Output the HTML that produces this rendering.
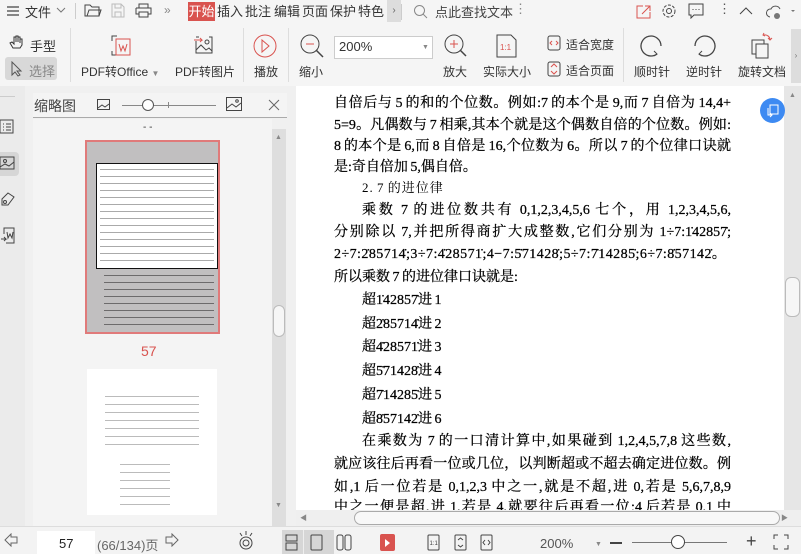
<!DOCTYPE html>
<html><head><meta charset="utf-8">
<style>
*{margin:0;padding:0;box-sizing:border-box}
body{width:801px;height:554px;overflow:hidden;background:#f3f3f3;font-family:"Liberation Sans","Noto Sans CJK SC",sans-serif;color:#333;position:relative}
.a{position:absolute}
.t{font-size:12px;color:#333;white-space:nowrap}
.tab{position:absolute;top:2px;height:19px;font-size:13px;line-height:19px;color:#333}
.pl{position:absolute;left:334px;width:397px;font-family:"Liberation Serif","Noto Serif CJK SC",serif;font-size:14px;color:#000;white-space:nowrap;text-align:justify;text-align-last:justify;line-height:20px;word-spacing:-1px;-webkit-text-stroke:0.25px #000}
.ind{left:362px;width:369px}
.nl{text-align-last:left}
.sv{position:absolute}
</style></head><body>
<div class="a" style="left:0;top:0;width:801px;height:86px;background:#f5f5f5"></div>
<svg class="sv" style="left:6px;top:4px" width="14" height="14"><path d="M1 3h12M1 7h12M1 11h12" stroke="#444" stroke-width="1.2"/></svg>
<div class="a t" style="left:25px;top:2px;font-size:13px">文件</div>
<svg class="sv" style="left:56px;top:7px" width="10" height="6"><path d="M1 1l4 4 4-4" stroke="#777" fill="none"/></svg>
<div class="a" style="left:75px;top:3px;width:1px;height:16px;background:#ccc"></div>
<svg class="sv" style="left:84px;top:3px" width="18" height="15"><path d="M1 2h5l2 2h7v9H1z M3 13l2-6h12l-2 6" stroke="#444" fill="none"/></svg>
<svg class="sv" style="left:111px;top:3px" width="14" height="15"><path d="M1 1h9l3 3v10H1z M4 1v4h6V1 M4 14v-5h6v5" stroke="#bbb" fill="none"/></svg>
<svg class="sv" style="left:135px;top:3px" width="17" height="15"><path d="M4 5V1h9v4 M1 5h15v6h-3 M4 11H1V5 M4 9h9v5H4z" stroke="#444" fill="none"/></svg>
<div class="a t" style="left:164px;top:3px;color:#888">»</div>
<div class="tab" style="left:188px;width:27px;background:#d9534f;color:#fff;text-align:center">开始</div>
<div class="tab" style="left:217px">插入</div>
<div class="tab" style="left:245px">批注</div>
<div class="tab" style="left:274px">编辑</div>
<div class="tab" style="left:302px">页面</div>
<div class="tab" style="left:330px">保护</div>
<div class="tab" style="left:358px;width:28px;overflow:hidden">特色应</div>
<div class="a" style="left:387px;top:0;width:14px;height:22px;background:#ddd;color:#666;font-size:10px;line-height:22px;text-align:center">›</div>
<div class="a" style="left:401px;top:4px;width:1px;height:16px;background:#ccc"></div>
<svg class="sv" style="left:413px;top:4px" width="16" height="16"><circle cx="6.5" cy="6.5" r="5" stroke="#888" fill="none"/><path d="M10 10l4 4" stroke="#888"/></svg>
<div class="a t" style="left:435px;top:2px;font-size:13px;color:#444">点此查找文本</div>
<div class="a t" style="left:514px;top:1px;color:#888;font-size:13px">⋮</div>
<svg class="sv" style="left:636px;top:4px" width="16" height="15"><path d="M7 2H1v12h13V8 M6 10l8-8M9 2h5v5" stroke="#d9534f" fill="none"/></svg>
<svg class="sv" style="left:661px;top:3px" width="16" height="16"><circle cx="8" cy="8" r="6" stroke="#444" fill="none" stroke-dasharray="3 1.5"/><circle cx="8" cy="8" r="2.5" stroke="#444" fill="none"/></svg>
<svg class="sv" style="left:688px;top:3px" width="16" height="16"><path d="M1 1h14v11H6l-3 3v-3H1z" stroke="#444" fill="none"/><path d="M4.5 6.5h1M7.5 6.5h1M10.5 6.5h1" stroke="#444"/></svg>
<div class="a t" style="left:718px;top:1px;color:#555;font-size:13px">⋮</div>
<svg class="sv" style="left:739px;top:7px" width="14" height="8"><path d="M1 7l6-6 6 6" stroke="#444" fill="none"/></svg>
<svg class="sv" style="left:766px;top:4px" width="30" height="16"><path d="M4 13a4 4 0 0 1 1-8 5 5 0 0 1 9 0" stroke="#555" fill="none"/><circle cx="11" cy="12" r="3" fill="#777"/><path d="M25 6l2 2 2-2" fill="#777"/></svg>
<svg class="sv" style="left:9px;top:34px" width="16" height="16"><path d="M4 14l-3-5 2-1 2 2V3h2v5V2h2v6V3h2v6V5h2v6l-2 3z" stroke="#333" fill="none"/></svg>
<div class="a t" style="left:30px;top:36px;font-size:13px">手型</div>
<div class="a" style="left:5px;top:57px;width:52px;height:23px;background:#d8d8d8;border-radius:3px"></div>
<svg class="sv" style="left:10px;top:61px" width="14" height="16"><path d="M2 1v13l3-3 3 4 2-1-3-4h4z" stroke="#555" fill="none"/></svg>
<div class="a t" style="left:29px;top:61px;font-size:13px;color:#888">选择</div>
<div class="a" style="left:70px;top:28px;width:1px;height:54px;background:#ddd"></div>
<svg class="sv" style="left:106px;top:33px" width="28" height="26"><path d="M6 8V3h5 M6 18v4h4" stroke="#444" fill="none"/><rect x="10" y="6" width="14" height="16" stroke="#d9534f" fill="none"/><path d="M13 11l2 7 2-5 2 5 2-7" stroke="#d9534f" fill="none"/></svg>
<div class="a t" style="left:81px;top:63px">PDF转Office <span style="font-size:8px;color:#888">▼</span></div>
<svg class="sv" style="left:193px;top:35px" width="22" height="20"><path d="M3 2h3 M16 2h3v16H3V6" stroke="#444" fill="none"/><path d="M1 5h8l-2-2M9 5l-2 2" stroke="#d9534f" fill="none"/><circle cx="14" cy="7" r="2" stroke="#444" fill="none"/><path d="M3 15l5-5 5 5 3-2 3 3" stroke="#444" fill="none"/></svg>
<div class="a t" style="left:175px;top:63px">PDF转图片</div>
<div class="a" style="left:243px;top:28px;width:1px;height:54px;background:#ddd"></div>
<svg class="sv" style="left:252px;top:33px" width="26" height="26"><circle cx="13" cy="13" r="11" stroke="#d9534f" fill="none"/><path d="M10 7l7 6-7 6z" stroke="#d9534f" fill="none"/></svg>
<div class="a t" style="left:254px;top:63px">播放</div>
<div class="a" style="left:288px;top:28px;width:1px;height:54px;background:#ddd"></div>
<svg class="sv" style="left:299px;top:33px" width="26" height="28"><circle cx="11" cy="11" r="9" stroke="#444" fill="none"/><path d="M7 11h8" stroke="#d9534f"/><path d="M17 17l7 7" stroke="#444" stroke-width="1.5"/></svg>
<div class="a t" style="left:299px;top:63px">缩小</div>
<div class="a" style="left:334px;top:36px;width:99px;height:23px;background:#fff;border:1px solid #ccc"></div>
<div class="a t" style="left:339px;top:39px;font-size:13px">200%</div>
<div class="a" style="left:422px;top:44px;font-size:7px;color:#888">▼</div>
<svg class="sv" style="left:443px;top:33px" width="26" height="28"><circle cx="11" cy="11" r="9" stroke="#444" fill="none"/><path d="M7 11h8M11 7v8" stroke="#d9534f"/><path d="M17 17l6 6" stroke="#444" stroke-width="1.5"/></svg>
<div class="a t" style="left:443px;top:63px">放大</div>
<svg class="sv" style="left:496px;top:34px" width="22" height="24"><path d="M1 1h14l5 5v17H1z" stroke="#444" fill="none"/><text x="4" y="16" font-size="8" fill="#d9534f" font-family="Liberation Sans">1:1</text></svg>
<div class="a t" style="left:483px;top:63px">实际大小</div>
<svg class="sv" style="left:547px;top:35px" width="14" height="16"><rect x="1" y="1" width="12" height="14" rx="2" stroke="#444" fill="none"/><path d="M5 6l-2 2 2 2M9 6l2 2-2 2" stroke="#d9534f" fill="none"/></svg>
<div class="a t" style="left:566px;top:36px">适合宽度</div>
<svg class="sv" style="left:547px;top:61px" width="14" height="16"><rect x="1" y="1" width="12" height="14" rx="2" stroke="#444" fill="none"/><path d="M4 6l3-3 3 3M4 10l3 3 3-3" stroke="#d9534f" fill="none"/></svg>
<div class="a t" style="left:566px;top:62px">适合页面</div>
<div class="a" style="left:623px;top:28px;width:1px;height:54px;background:#ddd"></div>
<svg class="sv" style="left:640px;top:34px" width="24" height="24"><path d="M17 20A10 10 0 1 1 21 12" stroke="#444" fill="none" stroke-width="1.3"/><path d="M14 17l3 3-3 2" stroke="#444" fill="none"/></svg>
<div class="a t" style="left:634px;top:63px">顺时针</div>
<svg class="sv" style="left:692px;top:34px" width="24" height="24"><path d="M7 20A10 10 0 1 0 3 12" stroke="#444" fill="none" stroke-width="1.3"/><path d="M10 17l-3 3 3 2" stroke="#444" fill="none"/></svg>
<div class="a t" style="left:686px;top:63px">逆时针</div>
<svg class="sv" style="left:749px;top:31px" width="26" height="28"><rect x="3" y="9" width="12" height="14" stroke="#444" fill="none"/><rect x="7" y="13" width="12" height="14" stroke="#444" fill="#f5f5f5"/><path d="M15 4a5 5 0 0 1 6 5M19 7l2 2 2-2M15 2l-1 2 2 1" stroke="#d9534f" fill="none"/></svg>
<div class="a t" style="left:738px;top:63px">旋转文档</div>
<div class="a" style="left:791px;top:29px;width:10px;height:54px;background:#ddd;font-size:8px;color:#777;line-height:54px;text-align:center">›</div>
<div class="a" style="left:0;top:86px;width:25px;height:440px;background:#ebebeb"></div>
<div class="a" style="left:25px;top:86px;width:271px;height:440px;background:#f0f0f0"></div>
<div class="a" style="left:0;top:96px;width:15px;height:1px;background:#ccc"></div>
<svg class="sv" style="left:0;top:119px" width="15" height="16"><rect x="0" y="1" width="13" height="13" stroke="#444" fill="none"/><path d="M3 5h1M6 5h5M3 8h1M6 8h5M3 11h1M6 11h5" stroke="#444"/></svg>
<div class="a" style="left:0;top:152px;width:19px;height:24px;background:#d6d6d6;border-radius:0 4px 4px 0"></div>
<svg class="sv" style="left:0;top:155px" width="16" height="16"><rect x="0" y="2" width="14" height="12" stroke="#444" fill="none"/><circle cx="5" cy="6" r="1.5" stroke="#444" fill="none"/><path d="M0 12l5-3 4 2 5-4" stroke="#444" fill="none"/></svg>
<svg class="sv" style="left:0;top:190px" width="16" height="18"><path d="M2 9l6-6 6 4-6 8H2z" stroke="#444" fill="none"/><circle cx="5" cy="12" r="1.5" stroke="#444" fill="none"/></svg>
<svg class="sv" style="left:0;top:227px" width="16" height="20"><path d="M4 7V1h10v15H6 M1 12h5l-2-2M6 12l-2 2" stroke="#444" fill="none"/><path d="M7 5l1 6 2-4 2 4 1-6" stroke="#444" fill="none"/></svg>
<div class="a" style="left:33px;top:93px;width:254px;height:25px;background:#f4f4f4;border-bottom:1px solid #aaa"></div>
<div class="a t" style="left:34px;top:96px;font-size:14px;color:#444">缩略图</div>
<svg class="sv" style="left:97px;top:99px" width="14" height="12"><rect x="0.5" y="0.5" width="12" height="10" stroke="#444" fill="none"/><path d="M1 9l4-3 3 2 4-3" stroke="#444" fill="none"/></svg>
<div class="a" style="left:122px;top:105px;width:94px;height:1px;background:#888"></div>
<div class="a" style="left:142px;top:99px;width:12px;height:12px;border-radius:50%;background:#fff;border:1px solid #555"></div>
<div class="a" style="left:168px;top:102px;width:1px;height:6px;background:#888"></div>
<svg class="sv" style="left:226px;top:97px" width="17" height="15"><rect x="0.5" y="0.5" width="15" height="13" stroke="#444" fill="none"/><circle cx="11" cy="4" r="1.3" stroke="#444" fill="none"/><path d="M1 11l5-4 4 3 5-4" stroke="#444" fill="none"/></svg>
<svg class="sv" style="left:268px;top:99px" width="12" height="12"><path d="M1 1l10 10M11 1L1 11" stroke="#666"/></svg>
<div class="a" style="left:33px;top:119px;width:239px;height:407px;background:#f4f4f4"></div>
<div class="a" style="left:272px;top:129px;width:14px;height:397px;background:#dedede"></div>
<div class="a" style="left:275px;top:134px;font-size:7px;color:#888">▲</div>
<div class="a" style="left:273px;top:305px;width:12px;height:32px;background:#f6f6f6;border:1px solid #bbb;border-radius:6px"></div>
<div class="a" style="left:275px;top:502px;font-size:7px;color:#888">▼</div>
<div class="a t" style="left:143px;top:122px;font-size:10px;color:#333">- -</div>
<div class="a" style="left:85px;top:140px;width:135px;height:194px;background:#c1bfc0;border:2px solid #e07a7a"></div>
<div class="a" style="left:96px;top:163px;width:122px;height:106px;background:#fff;border:1.5px solid #111"></div>
<div class="a" style="left:100px;top:166px;width:114px;height:100px;background:repeating-linear-gradient(#fff 0 3px,#aaa 3px 4px,#fff 4px 7px)"></div>
<div class="a" style="left:104px;top:272px;width:110px;height:54px;background:repeating-linear-gradient(#c1bfc0 0 3px,#6d6b6c 3px 4px,#c1bfc0 4px 7px)"></div>
<div class="a t" style="left:141px;top:343px;font-size:14px;color:#d9534f">57</div>
<div class="a" style="left:87px;top:369px;width:130px;height:146px;background:#fff"></div>
<div class="a" style="left:105px;top:392px;width:94px;height:58px;background:repeating-linear-gradient(#fff 0 4px,#bbb 4px 5px,#fff 5px 8px)"></div>
<div class="a" style="left:120px;top:460px;width:50px;height:52px;background:repeating-linear-gradient(#fff 0 4px,#bbb 4px 5px,#fff 5px 8px)"></div>
<div class="a" style="left:296px;top:86px;width:488px;height:424px;background:#fff"></div>
<div class="a" style="left:784px;top:86px;width:17px;height:440px;background:#e6e6e6"></div>
<div class="a" style="left:789px;top:92px;font-size:7px;color:#888">▲</div>
<div class="a" style="left:785px;top:277px;width:15px;height:40px;background:#f6f6f6;border:1px solid #bbb;border-radius:6px"></div>
<div class="a" style="left:760px;top:98px;width:25px;height:25px;border-radius:50%;background:#3d8af2"></div>
<svg class="sv" style="left:764px;top:102px" width="17" height="17"><rect x="6" y="3" width="8" height="9" stroke="#fff" fill="none"/><path d="M4 6v7h4M6 11l2 2-2 2" stroke="#fff" fill="none"/></svg>
<div class="pl" style="top:94px">自倍后与 5 的和的个位数。例如:7 的本个是 9,而 7 自倍为 14,4+</div>
<div class="pl" style="top:116px">5=9。凡偶数与 7 相乘,其本个就是这个偶数自倍的个位数。例如:</div>
<div class="pl" style="top:137px">8 的本个是 6,而 8 自倍是 16,个位数为 6。所以 7 的个位律口诀就</div>
<div class="pl nl" style="top:158px">是:奇自倍加 5,偶自倍。</div>
<div class="pl ind nl" style="top:178px;font-size:13px;letter-spacing:1px;-webkit-text-stroke:0">2. 7 的进位律</div>
<div class="pl ind" style="top:201px">乘数 7 的进位数共有 0,1,2,3,4,5,6 七个，用 1,2,3,4,5,6,</div>
<div class="pl" style="top:223px">分别除以 7,并把所得商扩大成整数,它们分别为 1÷7:1̇42857̇;</div>
<div class="pl nl" style="top:245px;word-spacing:0;letter-spacing:0.45px">2÷7:2̇85714̇;3÷7:4̇28571̇;4−7:5̇71428̇;5÷7:7̇14285̇;6÷7:8̇57142̇。</div>
<div class="pl nl" style="top:268px">所以乘数 7 的进位律口诀就是:</div>
<div class="pl ind nl" style="top:291px">超1̇42857̇进 1</div>
<div class="pl ind nl" style="top:315px">超2̇85714̇进 2</div>
<div class="pl ind nl" style="top:338px">超4̇28571̇进 3</div>
<div class="pl ind nl" style="top:362px">超5̇71428̇进 4</div>
<div class="pl ind nl" style="top:386px">超7̇14285̇进 5</div>
<div class="pl ind nl" style="top:410px">超8̇57142̇进 6</div>
<div class="pl ind" style="top:432px">在乘数为 7 的一口清计算中,如果碰到 1,2,4,5,7,8 这些数,</div>
<div class="pl" style="top:455px">就应该往后再看一位或几位，以判断超或不超去确定进位数。例</div>
<div class="pl" style="top:478px">如,1 后一位若是 0,1,2,3 中之一,就是不超,进 0,若是 5,6,7,8,9</div>
<div class="pl" style="top:498px;height:12px;overflow:hidden;line-height:20px">中之一便是超,进 1,若是 4,就要往后再看一位;4 后若是 0,1 中</div>
<div class="a" style="left:296px;top:510px;width:505px;height:16px;background:#efefef"></div>
<div class="a" style="left:300px;top:513px;font-size:7px;color:#888">◀</div>
<div class="a" style="left:354px;top:511px;width:426px;height:14px;background:#f8f8f8;border:1px solid #aaa;border-radius:7px"></div>
<div class="a" style="left:781px;top:513px;font-size:7px;color:#888">▶</div>
<div class="a" style="left:0;top:526px;width:801px;height:28px;background:#f3f3f3;border-top:1px solid #ddd"></div>
<svg class="sv" style="left:4px;top:533px" width="14" height="14"><path d="M1 7l6-6v3h6v6H7v3z" stroke="#666" fill="none"/></svg>
<div class="a" style="left:37px;top:531px;width:58px;height:23px;background:#fff"></div>
<div class="a t" style="left:59px;top:536px;font-size:13px;color:#222">57</div>
<div class="a t" style="left:97px;top:535px;font-size:13px;color:#666">(66/134)页</div>
<svg class="sv" style="left:165px;top:533px" width="14" height="14"><path d="M13 7L7 1v3H1v6h6v3z" stroke="#666" fill="none"/></svg>
<svg class="sv" style="left:237px;top:530px" width="18" height="20"><circle cx="9" cy="13" r="6" stroke="#444" fill="none"/><circle cx="9" cy="13" r="3" stroke="#444" fill="none"/><path d="M9 1v4M3 3l2 3M15 3l-2 3" stroke="#444"/></svg>
<div class="a" style="left:282px;top:530px;width:52px;height:24px;background:#d6d6d6"></div>
<div class="a" style="left:303px;top:530px;width:1px;height:24px;background:#eee"></div>
<svg class="sv" style="left:284px;top:534px" width="16" height="18"><rect x="2" y="1" width="11" height="6" stroke="#444" fill="none"/><rect x="2" y="9" width="11" height="7" stroke="#444" fill="none"/></svg>
<svg class="sv" style="left:309px;top:534px" width="16" height="18"><rect x="2" y="1" width="11" height="15" rx="1" stroke="#444" fill="none"/></svg>
<svg class="sv" style="left:336px;top:534px" width="16" height="18"><rect x="1" y="1" width="6" height="15" rx="2" stroke="#444" fill="none"/><rect x="9" y="1" width="6" height="15" rx="2" stroke="#444" fill="none"/></svg>
<div class="a" style="left:380px;top:534px;width:15px;height:17px;background:#d9534f;border-radius:2px"></div>
<svg class="sv" style="left:384px;top:538px" width="8" height="10"><path d="M1 1l5 4-5 4z" fill="#fff"/></svg>
<svg class="sv" style="left:427px;top:534px" width="14" height="18"><rect x="1" y="1" width="11" height="15" rx="1" stroke="#444" fill="none"/><text x="2.5" y="11" font-size="6" fill="#444" font-family="Liberation Sans">1:1</text></svg>
<svg class="sv" style="left:454px;top:534px" width="14" height="18"><rect x="1" y="1" width="11" height="15" rx="1" stroke="#444" fill="none"/><path d="M4 6l2.5-2 2.5 2M4 11l2.5 2 2.5-2" stroke="#444" fill="none"/></svg>
<svg class="sv" style="left:480px;top:534px" width="14" height="18"><rect x="1" y="1" width="11" height="15" rx="1" stroke="#444" fill="none"/><path d="M5 6l-2 2.5 2 2.5M8 6l2 2.5-2 2.5" stroke="#444" fill="none"/></svg>
<div class="a t" style="left:540px;top:536px;font-size:13px;color:#555">200%</div>
<div class="a" style="left:595px;top:541px;font-size:7px;color:#888">▼</div>
<div class="a" style="left:610px;top:542px;width:12px;height:2px;background:#444"></div>
<div class="a" style="left:632px;top:542px;width:95px;height:1px;background:#777"></div>
<div class="a" style="left:671px;top:535px;width:14px;height:14px;border-radius:50%;background:#fff;border:1px solid #444"></div>
<div class="a t" style="left:746px;top:531px;font-size:18px;color:#444">+</div>
<svg class="sv" style="left:773px;top:534px" width="16" height="16"><path d="M1 5V1h4M11 1h4v4M15 11v4h-4M5 15H1v-4" stroke="#444" fill="none"/></svg>
</body></html>
